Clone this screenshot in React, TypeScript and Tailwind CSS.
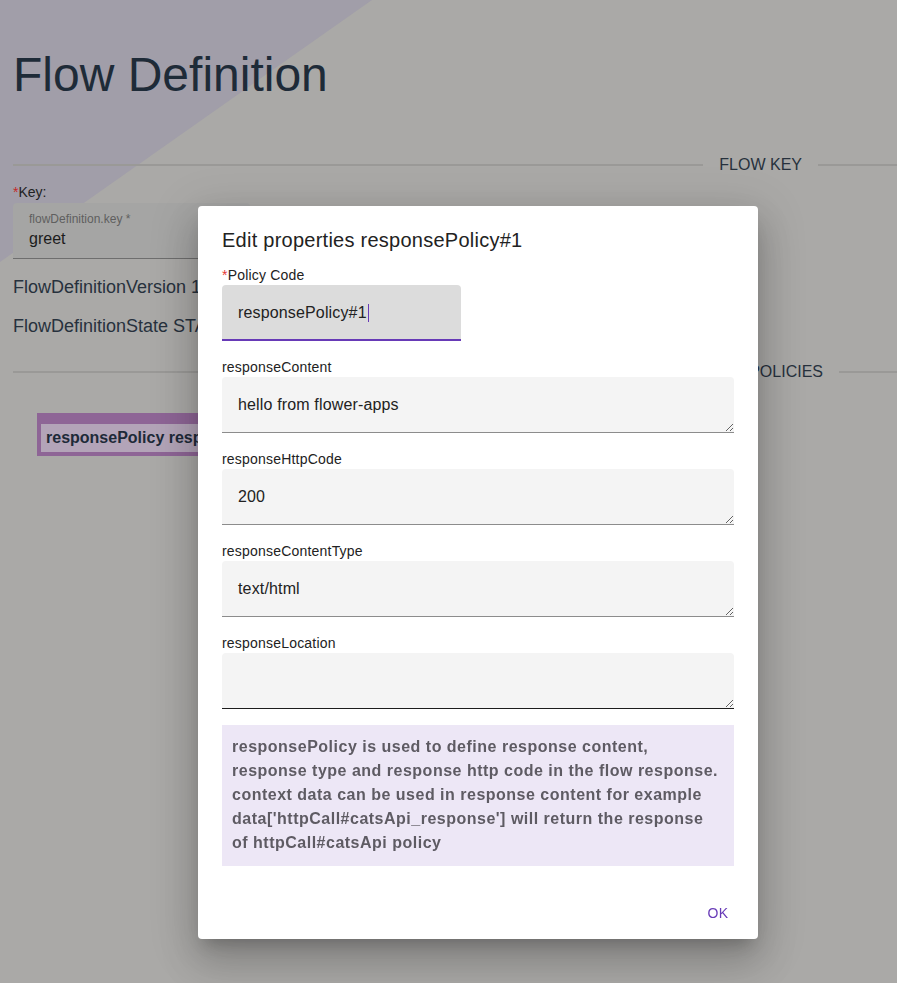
import React from "react";

const font = { fontFamily: '"Liberation Sans", Arial, sans-serif' };

function Divider({ label, right }: { label: string; right: string }) {
  return (
    <div className="flex items-center">
      <div className="h-[2px] flex-1 bg-[#9a9997]" />
      <div className="mx-4 text-[16px] leading-6 text-[#27313d] uppercase">{label}</div>
      <div className={`h-[2px] bg-[#9a9997] ${right}`} />
    </div>
  );
}

function Field({ label, value, dark }: { label: string; value: string; dark?: boolean }) {
  return (
    <div className="mt-4 flex flex-col">
      <div className="text-[14px] leading-5 tracking-[0.2px] text-[#222]">{label}</div>
      <textarea
        readOnly
        value={value}
        className={`block h-[56px] w-full resize-y rounded-t-[4px] bg-[#f4f4f4] px-4 py-4 text-[16px] leading-6 tracking-[0.15px] text-[#222] outline-none border-b ${
          dark ? "border-[#1c1c1c]" : "border-[#8c8c8c]"
        }`}
        style={font}
      />
    </div>
  );
}

export default function App() {
  return (
    <div className="relative h-[983px] w-full overflow-hidden bg-[#aaa9a7]" style={font}>
      <div className="absolute left-0 top-0 h-[270px] w-[380px] bg-[#a19ea9] [clip-path:polygon(0_0,372px_0,0_262px)]" />

      <div className="relative pl-[13px] pt-[51px]">
        <h1 className="text-[48px] leading-[48px] text-[#1e2b38]">Flow Definition</h1>

        <div className="mt-[54px]">
          <Divider label="Flow Key" right="w-[79px]" />
        </div>

        <div className="mt-[5px] text-[14px] leading-5 text-[#222]">
          <span className="text-[#c62828]">*</span>Key:
        </div>
        <div className="mt-[1px] h-[56px] w-[237px] rounded-t-[4px] border-b border-[#6e6e6e] bg-[#a5a5a4] px-4 pt-[8px]">
          <div className="text-[12px] leading-4 text-[#5f5f5f]">flowDefinition.key *</div>
          <div className="text-[16px] leading-6 text-[#1c1c1c]">greet</div>
        </div>

        <div className="mt-[16px] text-[18px] leading-6 text-[#27313d]">FlowDefinitionVersion 1</div>
        <div className="mt-[15px] text-[18px] leading-6 text-[#27313d]">FlowDefinitionState STARTED</div>

        <div className="mt-[22px]">
          <Divider label="Flow Policies" right="w-[58px]" />
        </div>

        <div className="ml-[24px] mt-[29px] inline-flex bg-[#8e6596] pl-[4px] pt-[11px] pb-[4px]">
          <div className="bg-[#b3a4b8] px-[5px] text-[16px] font-bold leading-[28px] text-[#1e2a38] whitespace-nowrap">
            responsePolicy responsePolicy#1
          </div>
        </div>
      </div>

      <div className="absolute left-[198px] top-[206px] flex h-[733px] w-[560px] flex-col rounded-[4px] bg-white shadow-[0_11px_15px_-7px_rgba(0,0,0,0.2),0_24px_38px_3px_rgba(0,0,0,0.14),0_9px_46px_8px_rgba(0,0,0,0.12)]">
        <div className="px-6 pt-[18px]">
          <div className="text-[20px] leading-8 tracking-[0.25px] text-[#222]">Edit properties responsePolicy#1</div>

          <div className="mt-[9px] text-[14px] leading-5 tracking-[0.2px] text-[#222]">
            <span className="text-[#e53935]">*</span>Policy Code
          </div>
          <div className="flex h-[56px] w-[239px] items-center rounded-t-[4px] border-b-2 border-[#673ab7] bg-[#dcdcdc] px-4 pt-[2px]">
            <span className="text-[16px] leading-6 tracking-[0.15px] text-[#222]">responsePolicy#1</span>
            <span className="ml-[1px] inline-block h-[18px] w-px bg-[#673ab7]" />
          </div>

          <Field label="responseContent" value="hello from flower-apps" />
          <Field label="responseHttpCode" value="200" />
          <Field label="responseContentType" value="text/html" />
          <Field label="responseLocation" value="" dark />

          <div className="mt-4 bg-[#ede7f6] px-[10px] pt-[10px] pb-[11px] text-[16px] font-bold leading-6 tracking-[0.5px] text-[#5e5b63] whitespace-nowrap">
            responsePolicy is used to define response content,
            <br />
            response type and response http code in the flow response.
            <br />
            context data can be used in response content for example
            <br />
            data['httpCall#catsApi_response'] will return the response
            <br />
            of httpCall#catsApi policy
          </div>
        </div>

        <div className="mt-auto flex justify-end p-2">
          <button className="h-[36px] min-w-[64px] px-2 text-[14px] uppercase tracking-[0.4px] text-[#673ab7]" style={font}>
            OK
          </button>
        </div>
      </div>
    </div>
  );
}
